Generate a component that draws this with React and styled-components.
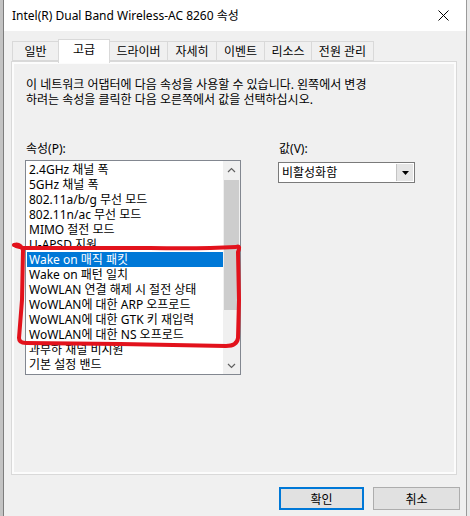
import React from 'react';
import styled, { createGlobalStyle } from 'styled-components';

const Global = createGlobalStyle`
  html, body { margin: 0; padding: 0; }
  body {
    width: 470px; height: 516px; overflow: hidden;
    background: #c9c9c9;
    font-family: "Noto Sans", "Noto Sans CJK KR", sans-serif;
    font-size: 12px; color: #000;
  }
`;

const Screen = styled.div`
  position: relative;
  display: flex;
  width: 470px;
  height: 516px;
`;

const Strip = styled.div`
  width: 3px;
  flex: none;
  background: ${p => (p.$side === 'left' ? '#c3c3c3' : '#e9e9e9')};
`;

const Window = styled.div`
  width: 464px;
  flex: none;
  box-sizing: border-box;
  border-left: 1px solid #7d7d7d;
  border-right: 1px solid #9a9a9a;
  display: flex;
  flex-direction: column;
  background: #f0f0f0;
`;

const TitleBar = styled.div`
  height: 31px;
  flex: none;
  background: #fff;
  display: flex;
  align-items: center;
  justify-content: space-between;
  padding-left: 8px;
`;

const Title = styled.div`
  font-size: 12px;
  line-height: 16px;
  margin-top: 1px;
`;

const Close = styled.div`
  width: 46px;
  height: 31px;
  display: flex;
  align-items: center;
  justify-content: center;
`;

const Client = styled.div`
  flex: 1;
  display: flex;
  flex-direction: column;
  padding: 8px 9px 0 7px;
`;

const TabRow = styled.div`
  display: flex;
  align-items: flex-end;
  height: 22px;
  padding-left: 1px;
  position: relative;
  z-index: 1;
`;

const Tab = styled.div`
  box-sizing: border-box;
  width: ${p => p.$w}px;
  height: ${p => (p.$active ? 24 : 20)}px;
  margin-bottom: ${p => (p.$active ? -2 : 0)}px;
  margin-left: -1px;
  border: 1px solid #d9d9d9;
  border-bottom: ${p => (p.$active ? 'none' : '1px solid #d9d9d9')};
  background: ${p => (p.$active ? '#fff' : '#f0f0f0')};
  display: flex;
  justify-content: center;
  padding-top: ${p => (p.$active ? 2 : 2)}px;
  line-height: 15px;
  font-size: 12px;
  &:first-child { margin-left: 0; }
`;

const Panel = styled.div`
  box-sizing: border-box;
  height: 414px;
  border: 1px solid #d9d9d9;
  background: #f0f0f0;
  box-shadow: inset 0 0 0 2px #fcfcfc;
  padding: 15px 13px 0 13px;
  display: flex;
  flex-direction: column;
`;

const Description = styled.p`
  margin: 0 0 0 1px;
  line-height: 15px;
  font-size: 12px;
`;

const Columns = styled.div`
  display: flex;
  gap: 37px;
  margin-top: 34px;
`;

const Column = styled.div`
  display: flex;
  flex-direction: column;
`;

const Label = styled.div`
  line-height: 15px;
  margin-left: 1px;
  height: 15px;
`;

const ListBox = styled.div`
  box-sizing: border-box;
  margin-top: 4px;
  width: 216px;
  height: 215px;
  border: 1px solid #828790;
  background: #fff;
  display: flex;
`;

const Items = styled.div`
  flex: 1;
  padding: 1px 0 0 1px;
  overflow: hidden;
`;

const Item = styled.div`
  height: 15px;
  line-height: 15px;
  padding-left: 2px;
  white-space: nowrap;
  background: ${p => (p.$selected ? '#0078d7' : 'transparent')};
  color: ${p => (p.$selected ? '#fff' : '#000')};
`;

const ScrollBar = styled.div`
  width: 17px;
  background: #f0f0f0;
  display: flex;
  flex-direction: column;
`;

const ArrowBox = styled.div`
  height: 17px;
  display: flex;
  align-items: center;
  justify-content: center;
`;

const Track = styled.div`
  flex: 1;
  display: flex;
  flex-direction: column;
`;

const Thumb = styled.div`
  height: 130px;
  margin: 2px 1px 0 1px;
  background: #cdcdcd;
`;

const Combo = styled.div`
  box-sizing: border-box;
  margin-top: 6px;
  width: 137px;
  height: 21px;
  border: 1px solid #7a7a7a;
  background: #fff;
  display: flex;
`;

const ComboText = styled.div`
  flex: 1;
  line-height: 19px;
  padding-left: 3px;
`;

const ComboButton = styled.div`
  width: 16px;
  margin: 1px;
  background: #e5e5e5;
  border-left: 1px solid #c4c4c4;
  display: flex;
  align-items: center;
  justify-content: center;
`;

const ButtonRow = styled.div`
  display: flex;
  justify-content: flex-end;
  gap: 9px;
  margin-top: 12px;
  margin-right: -3px;
`;

const Button = styled.div`
  box-sizing: border-box;
  width: ${p => p.$w}px;
  height: 23px;
  background: #e1e1e1;
  border: ${p => (p.$default ? '2px solid #0078d7' : '1px solid #adadad')};
  display: flex;
  align-items: center;
  justify-content: center;
  font-size: 12px;
`;

const Annotation = styled.svg`
  position: absolute;
  left: 0;
  top: 0;
  pointer-events: none;
`;

const Up = () => (
  <svg width="9" height="6" viewBox="0 0 9 6">
    <path d="M1 5 L4.5 1.5 L8 5" fill="none" stroke="#606060" strokeWidth="1.2" />
  </svg>
);
const Down = () => (
  <svg width="9" height="6" viewBox="0 0 9 6">
    <path d="M1 1 L4.5 4.5 L8 1" fill="none" stroke="#606060" strokeWidth="1.2" />
  </svg>
);

const tabs = [
  { t: '일반', w: 47 },
  { t: '고급', w: 52, active: true },
  { t: '드라이버', w: 59 },
  { t: '자세히', w: 50 },
  { t: '이벤트', w: 49 },
  { t: '리소스', w: 48 },
  { t: '전원 관리', w: 63 },
];

const items = [
  '2.4GHz 채널 폭',
  '5GHz 채널 폭',
  '802.11a/b/g 무선 모드',
  '802.11n/ac 무선 모드',
  'MIMO 절전 모드',
  'U-APSD 지원',
  'Wake on 매직 패킷',
  'Wake on 패턴 일치',
  'WoWLAN 연결 해제 시 절전 상태',
  'WoWLAN에 대한 ARP 오프로드',
  'WoWLAN에 대한 GTK 키 재입력',
  'WoWLAN에 대한 NS 오프로드',
  '과부하 채널 비지원',
  '기본 설정 밴드',
];

export default function App() {
  return (
    <>
      <Global />
      <Screen>
        <Strip $side="left" />
        <Window>
          <TitleBar>
            <Title>Intel(R) Dual Band Wireless-AC 8260 속성</Title>
            <Close>
              <svg width="11" height="11" viewBox="0 0 11 11">
                <path d="M0.5 0.5 L10.5 10.5 M10.5 0.5 L0.5 10.5" stroke="#000" strokeWidth="1" />
              </svg>
            </Close>
          </TitleBar>
          <Client>
            <TabRow>
              {tabs.map(tab => (
                <Tab key={tab.t} $w={tab.w} $active={tab.active}>{tab.t}</Tab>
              ))}
            </TabRow>
            <Panel>
              <Description>
                이 네트워크 어댑터에 다음 속성을 사용할 수 있습니다. 왼쪽에서 변경
                <br />
                하려는 속성을 클릭한 다음 오른쪽에서 값을 선택하십시오.
              </Description>
              <Columns>
                <Column>
                  <Label>속성(P):</Label>
                  <ListBox>
                    <Items>
                      {items.map((it, i) => (
                        <Item key={it} $selected={i === 6}>{it}</Item>
                      ))}
                    </Items>
                    <ScrollBar>
                      <ArrowBox><Up /></ArrowBox>
                      <Track><Thumb /></Track>
                      <ArrowBox><Down /></ArrowBox>
                    </ScrollBar>
                  </ListBox>
                </Column>
                <Column>
                  <Label>값(V):</Label>
                  <Combo>
                    <ComboText>비활성화함</ComboText>
                    <ComboButton>
                      <svg width="7" height="4" viewBox="0 0 7 4">
                        <path d="M0 0 L7 0 L3.5 4 Z" fill="#000" />
                      </svg>
                    </ComboButton>
                  </Combo>
                </Column>
              </Columns>
            </Panel>
            <ButtonRow>
              <Button $w={85} $default>확인</Button>
              <Button $w={87}>취소</Button>
            </ButtonRow>
          </Client>
        </Window>
        <Strip $side="right" />
        <Annotation width="470" height="516" viewBox="0 0 470 516">
          <path
            d="M14 245 Q20 243 23 250 L22 300 L19 338 Q19 343 26 343 L120 344 L226 346 Q237 346 238 338 L239 300 L238 252 Q241 245 236 247 Q200 249 150 248 L30 248 Q18 248 14 245"
            fill="none"
            stroke="#e2121c"
            strokeWidth="4"
            strokeLinecap="round"
            strokeLinejoin="round"
          />
        </Annotation>
      </Screen>
    </>
  );
}
